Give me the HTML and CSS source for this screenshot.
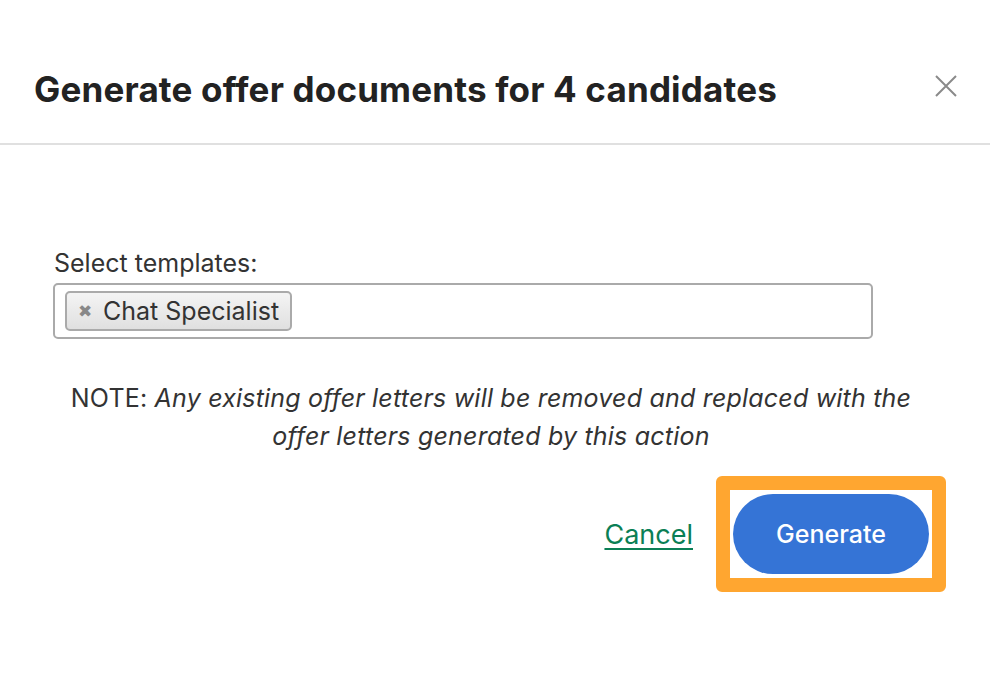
FILE: index.html
```html
<!DOCTYPE html>
<html>
<head>
<meta charset="utf-8">
<link rel="stylesheet" href="styles.css">
</head>
<body>
<div class="modal">
  <div class="header">
    <h1 class="title">Generate offer documents for 4 candidates</h1>
    <button class="close" aria-label="Close">
      <svg width="24" height="24" viewBox="0 0 24 24"><path d="M2 2 L22 22 M22 2 L2 22" stroke="#8a8a8a" stroke-width="2" fill="none"/></svg>
    </button>
  </div>
  <div class="body">
    <label class="label">Select templates:</label>
    <div class="select">
      <span class="tag"><span class="tag-x">✖</span>Chat Specialist</span>
    </div>
    <p class="note">NOTE: <em>Any existing offer letters will be removed and replaced with the offer letters generated by this action</em></p>
    <div class="actions">
      <a class="cancel" href="#">Cancel</a>
      <div class="highlight">
        <button class="generate">Generate</button>
      </div>
    </div>
  </div>
</div>
</body>
</html>
```
FILE: styles.css
```css
* { box-sizing: border-box; }
html, body { margin: 0; padding: 0; background: #fff; }
body { font-family: "Inter", "Liberation Sans", sans-serif; color: #222; }
.modal { width: 990px; height: 676px; }
.header {
  display: flex; align-items: flex-start; justify-content: space-between;
  height: 145px; padding: 68px 32px 0 34px;
  border-bottom: 2px solid #e0e0e0;
}
.title { margin: 0; font-size: 35px; line-height: 42px; font-weight: 700; color: #222; letter-spacing: 0.17px; }
.close { background: none; border: 0; padding: 0; width: 24px; height: 24px; margin-top: 6px; cursor: pointer; }
.body { padding: 104px 117px 0 53px; }
.label { display: block; font-size: 25px; color: #333; margin-left: 1px; line-height: 28px; }
.select {
  margin-top: 6px; height: 56px; border: 2px solid #aaa; border-radius: 5px;
  padding: 6px 10px; display: flex; align-items: center;
}
.tag {
  display: inline-flex; align-items: center; height: 40px; padding: 0 11px 0 11px;
  border: 2px solid #aaa; border-radius: 5px;
  background: linear-gradient(#f4f4f4, #e0e0e0);
  font-size: 25px; color: #333;
}
.tag-x { color: #888; font-size: 17px; margin-right: 11px; }
.note {
  width: 870px; margin: 40px 0 0 3px; text-align: center; font-size: 25px; line-height: 38px; color: #333; letter-spacing: 0.2px;
}
.note em { font-style: italic; }
.actions { display: flex; justify-content: flex-end; align-items: center; margin-top: 21px; margin-right: -73px; }
.cancel { color: #0b7f55; font-size: 27px; text-decoration: underline; text-underline-offset: 4px; margin-right: 23px; }
.highlight { border: 14px solid #ffa630; border-radius: 6px; padding: 4px 3px; background: #fff; }
.generate {
  width: 196px; height: 80px; border: 0; border-radius: 40px; background: #3574d6;
  color: #fff; font-family: inherit; font-size: 25px; font-weight: 500;
}
```
